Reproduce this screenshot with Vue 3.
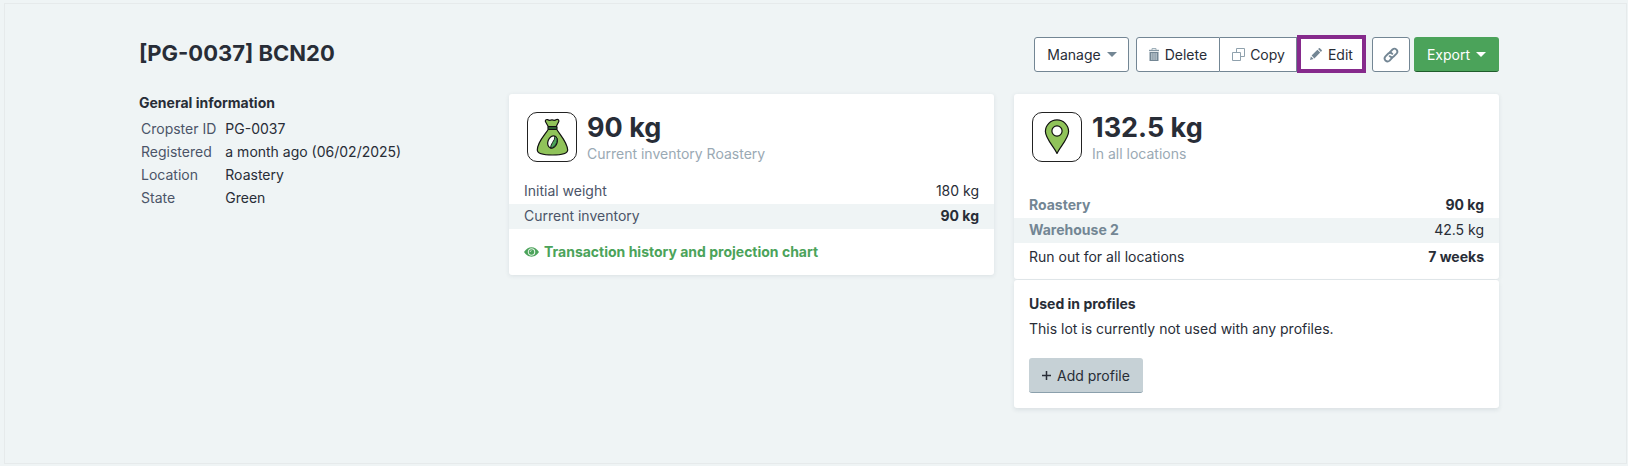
<script setup>
const details = [
  { label: 'Cropster ID', value: 'PG-0037' },
  { label: 'Registered', value: 'a month ago (06/02/2025)' },
  { label: 'Location', value: 'Roastery' },
  { label: 'State', value: 'Green' },
]

const inventory = [
  { label: 'Initial weight', value: '180 kg', strong: false },
  { label: 'Current inventory', value: '90 kg', strong: true },
]

const locations = [
  { label: 'Roastery', value: '90 kg', strong: true },
  { label: 'Warehouse 2', value: '42.5 kg', strong: false },
]
</script>

<template>
  <main class="page">
    <div class="container">
      <header class="header">
        <h1>[PG-0037] BCN20</h1>
        <div class="actions">
          <button type="button" class="btn manage">Manage <span class="caret"></span></button>
          <div class="group">
            <button type="button" class="btn">
              <svg class="icon" width="10" height="13" viewBox="0 0 10 13" aria-hidden="true">
                <path d="M3 2V.5h4V2" fill="none" stroke="#9fb0ba" />
                <path d="M0 1.8h10v1.4H0z" fill="#8799a5" />
                <path d="M.5 4h9v9h-9z" fill="#738694" />
                <path d="M2.9 5v7M5 5v7M7.1 5v7" stroke="#dfe6ea" stroke-width=".9" />
              </svg>
              Delete
            </button>
            <button type="button" class="btn">
              <svg class="icon copy" width="13" height="13" viewBox="0 0 13 13" fill="none" stroke="#8fa1ad" aria-hidden="true">
                <path d="M.5 4.5h8v8h-8zM4.500 4.500v-4h8v8h-4" />
              </svg>
              Copy
            </button>
            <button type="button" class="btn edit">
              <svg class="icon" width="12" height="12" viewBox="0 0 12 12" fill="#738694" aria-hidden="true">
                <path d="M0 12l.9-3.600 2.700 2.700zM1.600 7.600L7.400 1.800l2.800 2.800-5.800 5.800zM8.100 1.100L8.900.3q.5-.5 1 0l1.800 1.800q.5.5 0 1l-.8.8z" />
              </svg>
              Edit
            </button>
          </div>
          <button type="button" class="btn link-btn" aria-label="Copy link">
            <svg width="16" height="16" viewBox="0 0 16 16" fill="none" stroke="#738694" stroke-width="1.900" stroke-linecap="round" aria-hidden="true">
              <path d="M9.300 10.700L6.600 13.600Q4.600 15.400 2.500 13.500 0.600 11.400 2.500 9.300L5.300 6.500Q7.400 4.900 9.300 6.800" />
              <path d="M6.700 5.300L9.500 2.500Q11.500.7 13.500 2.600 15.300 4.700 13.500 6.700L10.700 9.500Q8.600 11.100 6.700 9.200" />
            </svg>
          </button>
          <button type="button" class="btn export">Export <span class="caret"></span></button>
        </div>
      </header>

      <div class="columns">
        <section class="general">
          <h2>General information</h2>
          <table class="details">
            <tbody>
              <tr v-for="d in details" :key="d.label">
                <th scope="row">{{ d.label }}</th>
                <td>{{ d.value }}</td>
              </tr>
            </tbody>
          </table>
        </section>

        <section class="card">
          <div class="summary">
            <svg class="badge" width="50" height="50" viewBox="0 0 50 50" aria-hidden="true">
              <rect x=".5" y=".5" width="49" height="49" rx="9.500" fill="#fff" stroke="#222" />
              <g stroke="#111" stroke-width="1.200" stroke-linejoin="round">
                <path d="M21.500 15L18.400 9.500Q18.100 7.200 20.500 7.600 22.500 9 25 7.800 27.500 9 29.500 7.500 32.200 7 31.800 9.500L29 15z" fill="#90c35a" />
                <path d="M21.500 17C18 23 10.500 29.500 10.300 38Q10.400 43 25.500 43 40.500 43 40.700 38C40.200 30 33 23 29.500 17z" fill="#90c35a" />
                <rect x="21" y="14.600" width="9" height="2.700" rx=".7" fill="#347a3d" />
                <ellipse cx="25.500" cy="30" rx="4.600" ry="6.300" transform="rotate(20 25.500 30)" fill="#fff" />
                <path d="M28 24Q31 25.500 29.800 30.500 27.700 36 23.500 36 23.700 33 25.500 30.500 28 27.500 28 24z" fill="#4ba35a" stroke-width=".9" />
              </g>
            </svg>
            <div>
              <p class="amount">90 kg</p>
              <p class="caption">Current inventory Roastery</p>
            </div>
          </div>
          <table class="rows inventory">
            <tbody>
              <tr v-for="r in inventory" :key="r.label">
                <th scope="row">{{ r.label }}</th>
                <td :class="{ strong: r.strong }">{{ r.value }}</td>
              </tr>
            </tbody>
          </table>
          <a class="history" href="#history">
            <svg width="15" height="10" viewBox="0 0 15 10" aria-hidden="true">
              <path d="M0 5Q3 .2 7.500.2T15 5Q12 9.800 7.500 9.800T0 5z" fill="#4ba35a" />
              <circle cx="7.500" cy="5" r="3.200" fill="none" stroke="#e3f2e5" stroke-width="1.100" />
              <path d="M6.200 5a1.400 1.400 0 0 1 1.400-1.400" fill="none" stroke="#e3f2e5" stroke-width=".8" />
            </svg>
            Transaction history and projection chart
          </a>
        </section>

        <div>
          <section class="card">
            <div class="summary">
              <svg class="badge" width="50" height="50" viewBox="0 0 50 50" aria-hidden="true">
                <rect x=".5" y=".5" width="49" height="49" rx="9.500" fill="#fff" stroke="#222" />
                <g stroke="#111" stroke-width="1.200" stroke-linejoin="round">
                  <path d="M25 41.500C22.500 35.500 13.400 26.500 13.400 19.500A11.600 11.600 0 0 1 36.600 19.500C36.600 26.500 27.500 35.500 25 41.500z" fill="#90c35a" />
                  <circle cx="25" cy="19" r="5.100" fill="#fff" />
                </g>
              </svg>
              <div>
                <p class="amount">132.5 kg</p>
                <p class="caption">In all locations</p>
              </div>
            </div>
            <table class="rows locations">
              <tbody>
                <tr v-for="r in locations" :key="r.label">
                  <th scope="row"><a href="#location">{{ r.label }}</a></th>
                  <td :class="{ strong: r.strong }">{{ r.value }}</td>
                </tr>
              </tbody>
            </table>
            <div class="runout">
              <span>Run out for all locations</span>
              <strong>7 weeks</strong>
            </div>
          </section>

          <section class="card profiles">
            <h2>Used in profiles</h2>
            <p>This lot is currently not used with any profiles.</p>
            <button type="button" class="btn add">
              <svg width="9" height="9" viewBox="0 0 9 9" stroke="#282d37" stroke-width="1.500" aria-hidden="true">
                <path d="M4.500 0v9M0 4.500h9" />
              </svg>
              Add profile
            </button>
          </section>
        </div>
      </div>
    </div>
  </main>
</template>

<style>
body {
  background: #eff4f5;
}
</style>

<style scoped>
.page {
  box-sizing: border-box;
  min-height: calc(100vh - 5px);
  margin: 3px 1px 2px 4px;
  padding: 33px 127px 53px 134px;
  border: 1px solid #e6eaeb;
  font: 14px/25px Inter, "Liberation Sans", sans-serif;
  color: #282d37;
}
.page * {
  box-sizing: border-box;
}
.header {
  display: flex;
  align-items: center;
  justify-content: space-between;
  height: 35px;
}
h1 {
  margin: 0;
  padding-bottom: 2px;
  font-size: 22px;
  font-weight: 700;
}
h2 {
  margin: 0;
  font-size: 14px;
  line-height: 18px;
  font-weight: 700;
}
p {
  margin: 0;
}
.actions,
.group {
  display: flex;
}
.btn {
  display: flex;
  align-items: center;
  height: 35px;
  padding: 0 12px;
  border: 1px solid #738694;
  border-radius: 3px;
  background: #fff;
  color: #282d37;
  font: inherit;
  white-space: nowrap;
}
.manage {
  margin-right: 7px;
  padding-right: 11px;
}
.caret {
  margin-left: 6px;
  border: 5px solid transparent;
  border-top-color: #738694;
  border-bottom: 0;
}
.icon {
  margin-right: 6px;
}
.copy {
  margin-right: 5px;
}
.group .btn:first-child {
  border-radius: 3px 0 0 3px;
}
.group .btn:nth-child(2) {
  padding-right: 11px;
  border-left: 0;
  border-radius: 0;
}
.group .edit {
  height: 38px;
  margin: -2px 6px -1px 0;
  padding: 0 9px;
  border: 4px solid #862a8c;
  border-radius: 0;
}
.link-btn {
  width: 38px;
  padding: 0;
  justify-content: center;
  margin-right: 4px;
}
.export {
  border: 0;
  border-bottom: 1px solid #1f5c2b;
  padding: 0 13px;
  background: #4ba35a;
  color: #fff;
}
.export .caret {
  border-top-color: #fff;
}
.columns {
  display: grid;
  grid-template-columns: 350fr 485fr 485fr;
  gap: 20px;
  align-items: start;
  margin-top: 22px;
}
table {
  border-collapse: collapse;
}
th {
  font-weight: 400;
  text-align: left;
}
.details {
  margin-top: 5px;
  line-height: 23px;
}
.details th {
  padding: 0 9px 0 2px;
  color: #4b5468;
}
.details td {
  padding: 0;
}
.card {
  border-radius: 3px;
  background: #fff;
  box-shadow: 0 1px 4px rgba(40, 60, 80, 0.1);
}
.summary {
  display: flex;
  gap: 10px;
  padding: 18px 18px 0;
}
.amount {
  font-size: 27px;
  line-height: 32px;
  font-weight: 700;
}
.caption {
  line-height: 20px;
  color: #9aa9b4;
}
.rows {
  width: 100%;
  line-height: 23px;
}
.rows th {
  padding: 0 0 2px 15px;
  color: #4b5468;
}
.rows td {
  padding: 0 15px 2px 0;
  text-align: right;
}
.rows tr:nth-child(even) {
  background: #eff4f5;
}
.rows a {
  color: #738694;
  font-weight: 700;
  text-decoration: none;
}
.rows .strong {
  font-weight: 700;
}
.inventory {
  margin-top: 15px;
}
.history {
  display: flex;
  align-items: center;
  gap: 5px;
  padding: 10px 15px 11px;
  color: #4ba35a;
  font-weight: 700;
  text-decoration: none;
}
.locations {
  margin-top: 29px;
}
.runout {
  display: flex;
  justify-content: space-between;
  padding: 1px 15px 10px;
}
.profiles {
  margin-top: 1px;
  padding: 15px;
  box-shadow: 0 2px 4px rgba(40, 60, 80, 0.1);
}
.profiles p {
  margin-top: 3px;
}
.add {
  gap: 6px;
  margin-top: 17px;
  padding: 0 13px;
  border: 0;
  border-bottom: 1px solid #8ba0ac;
  background: #c6d1d6;
}
</style>
